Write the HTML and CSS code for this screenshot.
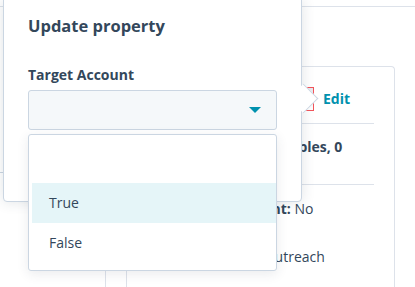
FILE: index.html
```html
<!DOCTYPE html>
<html lang="en">
<head>
    <meta charset="UTF-8">
    <meta name="viewport" content="width=device-width, initial-scale=1.0">
    <title>Update property</title>
    <link rel="stylesheet" href="styles.css">
</head>
<body>
    <div class="page">
        <div class="topbar"></div>
        <div class="content">
            <div class="aside">
                <div class="aside-panel">
                    <div class="aside-row"></div>
                </div>
            </div>
            <div class="card">
                <div class="card-head">
                    <div class="handle"></div>
                    <a class="edit-link">Edit</a>
                </div>
                <div class="divider"></div>
                <div class="summary">All associated deliverables, 0 records</div>
                <div class="divider"></div>
                <div class="prop"><b>Main Target Account:</b> No</div>
                <div class="prop prop-stack">
                    <b>Lead source</b>
                    <span>Customer webinar outreach</span>
                </div>
            </div>
        </div>
    </div>

    <div class="popover">
        <div class="popover-arrow"></div>
        <div class="popover-title">Update property</div>
        <div class="field-label">Target Account</div>
        <div class="field">
            <div class="select">
                <span class="caret"></span>
            </div>
            <div class="menu">
                <div class="menu-search"></div>
                <div class="option active">True</div>
                <div class="option">False</div>
            </div>
        </div>
    </div>
</body>
</html>
```

FILE: styles.css
```css
* {
    box-sizing: border-box;
}
body {
    margin: 0;
    width: 415px;
    height: 287px;
    overflow: hidden;
    position: relative;
    background-color: #fff;
    font-family: "Open Sans", "Liberation Sans", sans-serif;
    color: #33475b;
}
.page {
    height: 100%;
    display: flex;
    flex-direction: column;
}
.topbar {
    height: 7px;
    flex: none;
    border-bottom: 1px solid #dde2ea;
}
.content {
    flex: 1;
    display: flex;
    padding-top: 59px;
}
.aside {
    width: 126px;
    padding-top: 106px;
}
.aside-panel {
    width: 106px;
    height: 100%;
    border-right: 1px solid #dde2ea;
}
.aside-row {
    height: 30px;
    border-top: 1px solid #cbd6e2;
}
.card {
    width: 269px;
    border: 1px solid #dde2ea;
    border-bottom: none;
    border-radius: 4px 4px 0 0;
    padding: 20px 20px 0 15px;
    font-size: 14px;
    line-height: 18px;
}
.card-head {
    display: grid;
    grid-template-columns: 1fr auto;
    column-gap: 9px;
    align-items: center;
    height: 24px;
    padding-right: 24px;
    margin-bottom: 12px;
}
.handle {
    height: 24px;
    border: 1px solid #f2545b;
    background: linear-gradient(#e6e7ec, #fff);
}
.edit-link {
    color: #0091ae;
    font-weight: 700;
}
.divider {
    border-top: 1px solid #dde2ea;
}
.summary {
    font-weight: 700;
    padding: 14px 0 10px;
}
.prop {
    margin-top: 15px;
}
.prop-stack {
    margin-top: 12px;
    display: flex;
    flex-direction: column;
}

.popover {
    position: absolute;
    left: 3px;
    top: -1px;
    width: 299px;
    background-color: #fff;
    border: 1px solid #cbd6e2;
    border-radius: 0 0 4px 4px;
    padding: 14px 24px 71px;
    box-shadow: 0 0 14px rgba(45, 62, 80, 0.14);
    z-index: 2;
}
.popover-arrow {
    position: absolute;
    left: 289px;
    top: 88px;
    width: 21px;
    height: 21px;
    background-color: #fff;
    border-top: 1px solid #cbd6e2;
    border-right: 1px solid #cbd6e2;
    transform: rotate(45deg);
}
.popover-title {
    font-size: 16.5px;
    line-height: 24px;
    font-weight: 700;
    margin-bottom: 27px;
}
.field-label {
    font-size: 14px;
    line-height: 20px;
    font-weight: 700;
    margin-bottom: 5px;
}
.field {
    position: relative;
}
.select {
    height: 40px;
    background-color: #f5f8fa;
    border: 1px solid #cbd6e2;
    border-radius: 3px;
    display: flex;
    align-items: center;
    justify-content: flex-end;
    padding-right: 15px;
}
.caret {
    width: 0;
    height: 0;
    border-left: 6px solid transparent;
    border-right: 6px solid transparent;
    border-top: 6px solid #0091ae;
}
.menu {
    position: absolute;
    top: calc(100% + 4px);
    left: 0;
    right: 0;
    background-color: #fff;
    border: 1px solid #cbd6e2;
    border-radius: 3px;
    padding: 0 0 7px 3px;
    box-shadow: 0 3px 12px rgba(45, 62, 80, 0.1);
}
.menu-search {
    height: 48px;
}
.option {
    height: 40px;
    line-height: 40px;
    padding-left: 17px;
    font-size: 14px;
}
.option.active {
    background-color: #e5f5f8;
}
```
